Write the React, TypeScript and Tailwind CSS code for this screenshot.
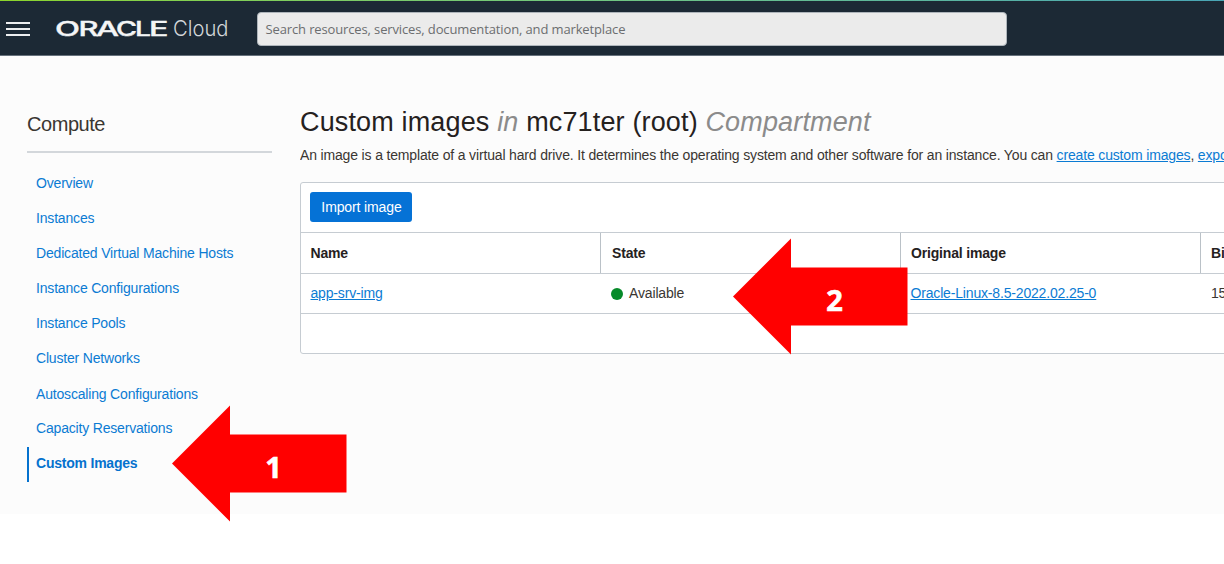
import React from "react";

const navItems = [
  "Overview",
  "Instances",
  "Dedicated Virtual Machine Hosts",
  "Instance Configurations",
  "Instance Pools",
  "Cluster Networks",
  "Autoscaling Configurations",
  "Capacity Reservations",
];

function Brand() {
  return (
    <svg className="ml-[24px] h-[30px] w-[178px] shrink-0" viewBox="0 0 178 30" aria-label="Oracle Cloud">
      <g fill="#f4f5f6" stroke="#f4f5f6" strokeWidth="0.35" fontFamily="Inter, sans-serif" fontSize="19.5" fontWeight="500">
        <text x="1" y="23" textLength="25" lengthAdjust="spacingAndGlyphs">O</text>
        <text x="24.5" y="23" textLength="20" lengthAdjust="spacingAndGlyphs">R</text>
        <text x="42" y="23" textLength="23" lengthAdjust="spacingAndGlyphs">A</text>
        <text x="62" y="23" textLength="21" lengthAdjust="spacingAndGlyphs">C</text>
        <text x="81" y="23" textLength="16" lengthAdjust="spacingAndGlyphs">L</text>
        <text x="95" y="23" textLength="19.5" lengthAdjust="spacingAndGlyphs">E</text>
      </g>
      <text x="119" y="23" fill="#d3d7da" fontFamily="Inter, sans-serif" fontSize="22" fontWeight="300" textLength="55.5" lengthAdjust="spacingAndGlyphs">
        Cloud
      </text>
    </svg>
  );
}

function Header() {
  return (
    <header className="flex h-[56px] flex-col border-b border-[#66717c] bg-[#1c2935]">
      <div className="h-px shrink-0 bg-gradient-to-r from-[#8cd42a] via-[#70c582] to-[#49a5b5]" />
      <div className="flex flex-1 items-center pl-[6px]">
        <div className="flex w-[24px] flex-col gap-[4px] pt-px">
          <div className="h-[2px] bg-[#eceef0]" />
          <div className="h-[2px] bg-[#eceef0]" />
          <div className="h-[2px] bg-[#eceef0]" />
        </div>
        <Brand />
        <div className="ml-[25px] mt-[1px] flex h-[34px] w-[750px] items-center rounded-[4px] border border-[#aeb5bb] bg-[#ebebeb] pl-[7.5px] pt-[2px] font-['Open_Sans',sans-serif] text-[13px] tracking-[-0.13px] text-[#6b6e70]">
          Search resources, services, documentation, and marketplace
        </div>
      </div>
    </header>
  );
}

function Sidebar() {
  return (
    <nav className="ml-[27px] w-[245px] shrink-0 pt-[54px]">
      <h2 className="h-[43px] border-b-2 border-[#d3d7db] text-[20px] leading-[28px] tracking-[-0.45px] text-[#3a3632]">Compute</h2>
      <ul className="pt-[13px] text-[14px] tracking-[-0.18px]">
        {navItems.map((item) => (
          <li key={item} className="h-[35.1px] pl-[9px] leading-[35px] text-[#0b7bd3] last:leading-[34px] nth-8:leading-[33px]">
            {item}
          </li>
        ))}
        <li className="h-[35px] border-l-2 border-[#0572ce] pl-[7px] font-bold leading-[33px] tracking-[-0.22px] text-[#0572ce]">
          Custom Images
        </li>
      </ul>
    </nav>
  );
}

function ImageTable() {
  return (
    <section className="mt-[17px] h-[172px] w-[1000px] rounded-[3px] border border-[#c6ccd2] bg-white text-[14px] tracking-[-0.17px]">
      <div className="flex h-[50px] items-center border-b border-[#c6ccd2] pb-px pl-[9px]">
        <button className="h-[30px] w-[102px] rounded-[3px] bg-[#0572d6] pl-px text-[14px] tracking-[-0.12px] text-white">Import image</button>
      </div>
      <div className="flex h-[41px] items-center border-b border-[#c6ccd2] font-bold text-[#25211e]">
        <div className="flex h-full w-[300px] items-center border-r border-[#bac1c7] pl-[9.5px]">Name</div>
        <div className="flex h-full w-[300px] items-center border-r border-[#bac1c7] pl-[11px]">State</div>
        <div className="flex h-full w-[300px] items-center border-r border-[#bac1c7] pl-[10px]">Original image</div>
        <div className="pl-[10px]">Billable size</div>
      </div>
      <div className="flex h-[40px] items-center border-b border-[#c6ccd2] text-[#3a3632]">
        <div className="w-[300px] pl-[9.5px] text-[#0b7bd3] underline">app-srv-img</div>
        <div className="flex w-[300px] items-center gap-[6px] pl-[10px] tracking-[-0.15px]">
          <span className="h-[12px] w-[12px] rounded-full bg-[#068a29]" />
          Available
        </div>
        <div className="w-[300px] pl-[9.5px] text-[#0b7bd3] underline">Oracle-Linux-8.5-2022.02.25-0</div>
        <div className="pl-[10px]">15 GB</div>
      </div>
    </section>
  );
}

function Arrow({ label }: { label: string }) {
  return (
    <svg width="175" height="117" viewBox="0 0 175 117">
      <polygon points="0,58.5 58,0.5 58,29.5 174.5,29.5 174.5,87.5 58,87.5 58,116.5" fill="#ff0000" />
      <text x="101.5" y="73" textAnchor="middle" fill="#ffffff" stroke="#ffffff" strokeWidth="0.6" fontFamily="'Open Sans', sans-serif" fontWeight="700" fontSize="29">
        {label}
      </text>
    </svg>
  );
}

export default function App() {
  return (
    <div className="relative h-[564px] w-[1224px] overflow-hidden bg-white font-['Liberation_Sans',Arial,sans-serif]">
      <Header />
      <div className="flex h-[458px] overflow-hidden bg-[#fcfcfc]">
        <Sidebar />
        <main className="ml-[28px] w-[924px] shrink-0 overflow-hidden pt-[48px]">
          <h1 className="whitespace-nowrap text-[27px] leading-[36px] tracking-[0.15px] text-[#25211e]">
            Custom images <i className="text-[#8b8b8b]">in</i> mc71ter (root) <i className="text-[#8b8b8b]">Compartment</i>
          </h1>
          <p className="mt-[5px] whitespace-nowrap text-[14px] leading-[20px] tracking-[-0.158px] text-[#3a3632]">
            An image is a template of a virtual hard drive. It determines the operating system and other software for an instance. You can{" "}
            <a className="text-[#0b7bd3] underline">create custom images</a>, <a className="text-[#0b7bd3] underline">export images</a>
          </p>
          <ImageTable />
        </main>
      </div>
      <div className="absolute left-[171.5px] top-[404.5px]">
        <Arrow label="1" />
      </div>
      <div className="absolute left-[733px] top-[238px]">
        <Arrow label="2" />
      </div>
    </div>
  );
}
